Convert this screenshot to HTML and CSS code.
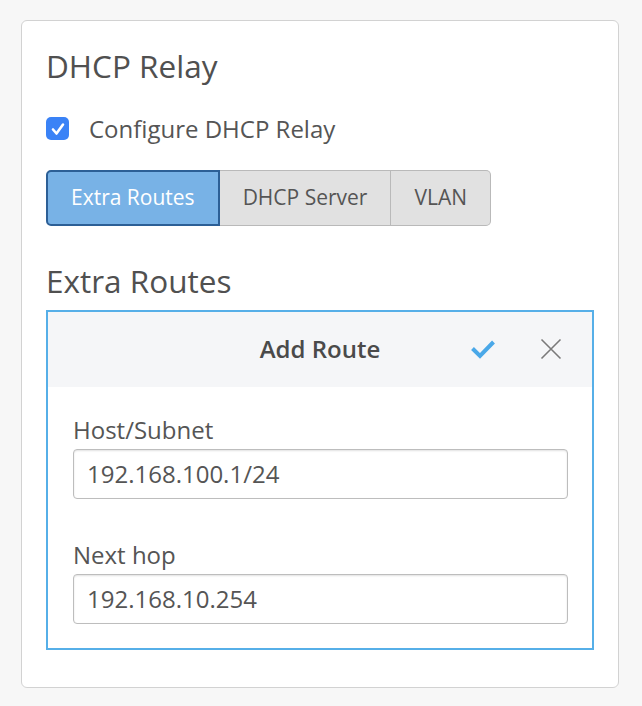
FILE: index.html
```html
<!DOCTYPE html>
<html>
<head>
<meta charset="utf-8">
<link rel="stylesheet" href="styles.css">
</head>
<body>
<div class="card">
  <h2 class="title">DHCP Relay</h2>
  <label class="check-row">
    <span class="checkbox">
      <svg viewBox="0 0 22 22" width="22" height="22"><path d="M6 11.5 L9.5 15.5 L16 6.5" fill="none" stroke="#fff" stroke-width="2.6" stroke-linecap="round" stroke-linejoin="round"/></svg>
    </span>
    <span class="check-label">Configure DHCP Relay</span>
  </label>
  <div class="btn-group">
    <button class="btn active">Extra Routes</button>
    <button class="btn">DHCP Server</button>
    <button class="btn">VLAN</button>
  </div>
  <h2 class="title sub">Extra Routes</h2>
  <div class="panel">
    <div class="panel-head">
      <span class="panel-title">Add Route</span>
      <span class="panel-actions">
        <svg class="ic-check" viewBox="0 0 26 20" width="26" height="20"><path d="M2.5 9.5 L10 17 L23.5 3" fill="none" stroke="#4aa8e8" stroke-width="4" stroke-linejoin="miter"/></svg>
        <svg class="ic-close" viewBox="0 0 22 22" width="22" height="22"><path d="M1.5 1.5 L20.5 20.5 M20.5 1.5 L1.5 20.5" fill="none" stroke="#7a7a7a" stroke-width="1.6"/></svg>
      </span>
    </div>
    <div class="panel-body">
      <div class="field">
        <div class="field-label">Host/Subnet</div>
        <div class="input">192.168.100.1/24</div>
      </div>
      <div class="field second">
        <div class="field-label">Next hop</div>
        <div class="input">192.168.10.254</div>
      </div>
    </div>
  </div>
</div>
</body>
</html>
```
FILE: styles.css
```css
html, body {
  margin: 0;
  padding: 0;
  background: #f7f7f7;
  font-family: "Open Sans", "Liberation Sans", sans-serif;
  color: #555;
}
body {
  padding: 20px 23px 0 21px;
}
.card {
  background: #fff;
  border: 1px solid #d2d2d2;
  border-radius: 6px;
  padding: 26px 24px 37px 24px;
}
.title {
  margin: 0;
  font-size: 31.5px;
  line-height: 37.8px;
  font-weight: 400;
  color: #505050;
}
.title.sub {
  margin-top: 36px;
  margin-bottom: 10px;
}
.check-row {
  display: flex;
  align-items: center;
  margin-top: 26px;
  height: 36px;
  font-size: 24px;
  line-height: 36px;
}
.checkbox {
  width: 23px;
  height: 23px;
  border-radius: 5px;
  background: #3a82f6;
  display: flex;
  align-items: center;
  justify-content: center;
}
.check-label {
  margin-left: 20px;
  color: #555;
}
.btn-group {
  display: flex;
  margin-top: 23px;
}
.btn {
  font-family: inherit;
  font-size: 21px;
  line-height: 31.5px;
  height: 56px;
  padding: 0 23px;
  background: #e1e1e1;
  color: #555;
  border: 1px solid #b9b9b9;
  border-left: none;
  margin: 0;
}
.btn:first-child {
  border-left: 1px solid #b9b9b9;
  border-radius: 5px 0 0 5px;
}
.btn:last-child {
  border-radius: 0 5px 5px 0;
}
.btn.active {
  background: #78b2e6;
  color: #fff;
  border: 2px solid #2c5f96;
  padding: 0 23px;
}
.btn.active + .btn {
  border-left: none;
}
.panel {
  border: 2px solid #56afe8;
}
.panel-head {
  position: relative;
  background: #f5f6f8;
  height: 75px;
  display: flex;
  align-items: center;
  justify-content: center;
}
.panel-title {
  font-size: 24px;
  font-weight: 600;
  line-height: 36px;
  color: #4a4a4a;
}
.panel-actions {
  position: absolute;
  right: 30px;
  top: 26px;
  display: flex;
  align-items: center;
  gap: 44px;
}
.panel-body {
  padding: 25px 24px 24px 25px;
}
.field-label {
  font-size: 24px;
  line-height: 36px;
  margin-bottom: 1px;
}
.field.second {
  margin-top: 38px;
}
.input {
  height: 50px;
  box-sizing: border-box;
  border: 1px solid #bdbdbd;
  border-radius: 4px;
  box-shadow: inset 0 1px 2px rgba(0,0,0,0.12);
  font-size: 24px;
  line-height: 48px;
  padding-left: 13px;
  color: #555;
}
```
